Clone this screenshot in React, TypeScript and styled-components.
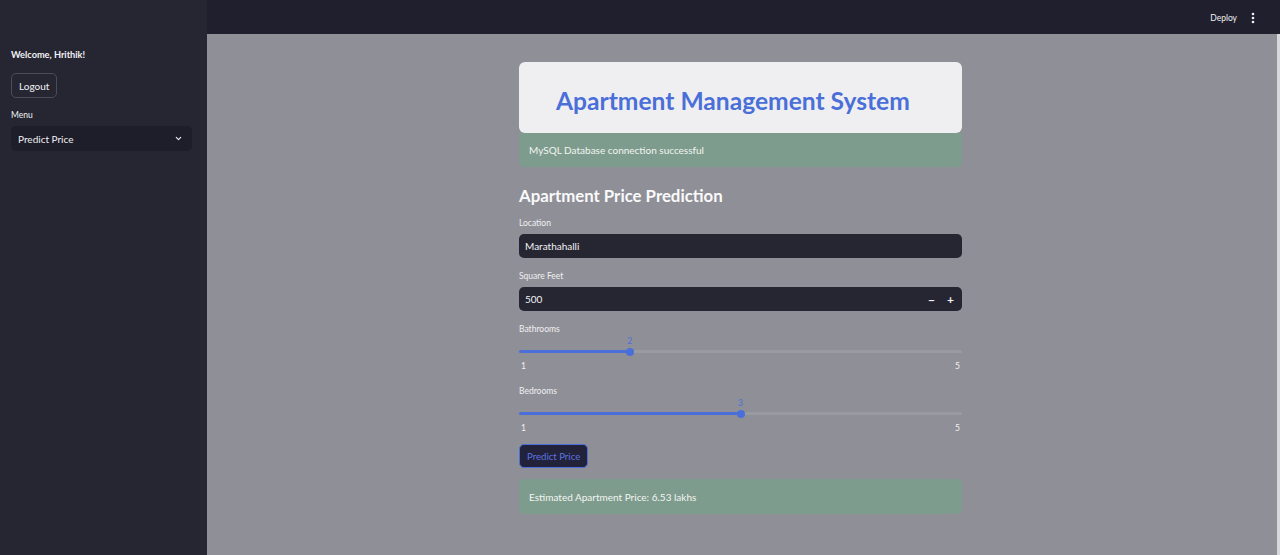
import React from "react";
import styled, { createGlobalStyle } from "styled-components";

const Global = createGlobalStyle`
  html, body { margin: 0; padding: 0; height: 100%; }
  body { font-family: Lato, "Noto Sans", sans-serif; background: #8f8f97; overflow: hidden; }
  #root { height: 555px; }
`;

const Shell = styled.div`
  display: grid;
  grid-template-columns: 207px 1fr;
  height: 555px;
`;

const Sidebar = styled.aside`
  background: #262633;
  padding: 48px 15px 0 11px;
  display: flex;
  flex-direction: column;
  color: #f2f2f4;
`;

const Welcome = styled.div`
  font-size: 9.2px;
  font-weight: 700;
  line-height: 14px;
`;

const GhostButton = styled.button`
  margin-top: 11px;
  align-self: flex-start;
  height: 25px;
  padding: 0 7px;
  background: transparent;
  color: #f2f2f4;
  border: 1px solid #4c4c58;
  border-radius: 5px;
  font: 400 10px Lato, "Noto Sans", sans-serif;
`;

const Label = styled.div<{ $mt?: number }>`
  font-size: 8.5px;
  color: #f0f0f2;
  line-height: 12px;
  margin-top: ${(p) => p.$mt ?? 0}px;
`;

const Select = styled.div`
  margin-top: 5px;
  height: 25px;
  background: #1e1e2b;
  border-radius: 5px;
  display: flex;
  align-items: center;
  justify-content: space-between;
  padding: 0 9px 0 7px;
  font-size: 10px;
  color: #f0f0f2;
`;

const Main = styled.main`
  display: flex;
  flex-direction: column;
  position: relative;
`;

const TopBar = styled.header`
  height: 34px;
  background: #1f1f2d;
  display: flex;
  align-items: center;
  justify-content: flex-end;
  padding-right: 25px;
  padding-top: 2px;
  box-sizing: border-box;
  gap: 14px;
  color: #f0f0f2;
  font-size: 8.5px;
`;

const Scroll = styled.div`
  position: absolute;
  right: 0;
  top: 34px;
  bottom: 0;
  width: 3px;
  background: #d8d8dc;
`;

const Content = styled.div`
  width: 443px;
  margin: 28px auto 0 312px;
  display: flex;
  flex-direction: column;
`;

const TitleCard = styled.div`
  height: 71px;
  background: #efeff2;
  border-radius: 6px;
  display: flex;
  align-items: center;
  padding-left: 37px;
  padding-top: 5px;
  box-sizing: border-box;
  color: #4a6fd8;
  font-size: 24.6px;
  font-weight: 700;
`;

const Alert = styled.div<{ $h: number }>`
  height: ${(p) => p.$h}px;
  background: #7e9c8d;
  border-radius: 0 0 5px 5px;
  display: flex;
  align-items: center;
  padding-left: 10px;
  font-size: 10px;
  color: #f2f5f2;
`;

const ResultAlert = styled(Alert)`
  border-radius: 5px;
  margin-top: 11px;
`;

const Heading = styled.h2`
  margin: 18px 0 0;
  font-size: 16.8px;
  font-weight: 700;
  color: #fafafa;
  line-height: 22px;
`;

const Field = styled.div<{ $mt: number }>`
  margin-top: ${(p) => p.$mt}px;
  display: flex;
  flex-direction: column;
`;

const Input = styled.div`
  margin-top: 5px;
  height: 24px;
  background: #262633;
  border-radius: 5px;
  display: flex;
  align-items: center;
  padding: 0 6px;
  font-size: 10px;
  color: #f2f2f4;
`;

const Steps = styled.div`
  margin-left: auto;
  display: flex;
  gap: 12px;
  font-size: 12px;
  font-weight: 700;
  padding-right: 2px;
`;

const SliderWrap = styled.div`
  position: relative;
  height: 24px;
`;

const Track = styled.div`
  position: absolute;
  left: 0;
  right: 0;
  top: 15px;
  height: 3px;
  border-radius: 2px;
  background: #9a9aa2;
`;

const Fill = styled.div`
  position: absolute;
  left: 0;
  top: 15px;
  height: 3px;
  border-radius: 2px;
  background: #4a6fd8;
`;

const Thumb = styled.div`
  position: absolute;
  top: 12.5px;
  width: 8px;
  height: 8px;
  margin-left: -4px;
  border-radius: 50%;
  background: #4a6fd8;
`;

const ThumbValue = styled.div`
  position: absolute;
  top: 1px;
  transform: translateX(-50%);
  font-size: 8.5px;
  color: #4a6fd8;
`;

const Range = styled.div`
  display: flex;
  justify-content: space-between;
  font-size: 8.5px;
  color: #f2f2f4;
  padding: 0 2px;
  margin-top: 2px;
`;

const PrimaryButton = styled.button`
  margin-top: 11px;
  align-self: flex-start;
  height: 24px;
  padding: 0 7px;
  background: #22223a;
  color: #5b73e0;
  border: 1px solid #4a6fd8;
  border-radius: 5px;
  font: 400 9.6px Lato, "Noto Sans", sans-serif;
`;

const Slider = ({ label, value, min, max, mt }: { label: string; value: number; min: number; max: number; mt: number }) => {
  const pct = ((value - min) / (max - min)) * 100;
  return (
    <Field $mt={mt}>
      <Label>{label}</Label>
      <SliderWrap>
        <Track />
        <Fill style={{ width: `${pct}%` }} />
        <ThumbValue style={{ left: `${pct}%` }}>{value}</ThumbValue>
        <Thumb style={{ left: `${pct}%` }} />
      </SliderWrap>
      <Range>
        <span>{min}</span>
        <span>{max}</span>
      </Range>
    </Field>
  );
};

export default function App() {
  return (
    <>
      <Global />
      <Shell>
        <Sidebar>
          <Welcome>Welcome, Hrithik!</Welcome>
          <GhostButton>Logout</GhostButton>
          <Label $mt={11}>Menu</Label>
          <Select>
            <span>Predict Price</span>
            <svg width="9" height="9" viewBox="0 0 24 24" fill="none" stroke="#f0f0f2" strokeWidth="3" strokeLinecap="round" strokeLinejoin="round">
              <path d="M6 9l6 6 6-6" />
            </svg>
          </Select>
        </Sidebar>
        <Main>
          <TopBar>
            <span>Deploy</span>
            <svg width="4" height="12" viewBox="0 0 4 12">
              <circle cx="2" cy="2" r="1.3" fill="#f0f0f2" />
              <circle cx="2" cy="6" r="1.3" fill="#f0f0f2" />
              <circle cx="2" cy="10" r="1.3" fill="#f0f0f2" />
            </svg>
          </TopBar>
          <Scroll />
          <Content>
            <TitleCard>Apartment Management System</TitleCard>
            <Alert $h={34}>MySQL Database connection successful</Alert>
            <Heading>Apartment Price Prediction</Heading>
            <Field $mt={10}>
              <Label>Location</Label>
              <Input>Marathahalli</Input>
            </Field>
            <Field $mt={12}>
              <Label>Square Feet</Label>
              <Input>
                500
                <Steps>
                  <span>−</span>
                  <span>+</span>
                </Steps>
              </Input>
            </Field>
            <Slider label="Bathrooms" value={2} min={1} max={5} mt={12} />
            <Slider label="Bedrooms" value={3} min={1} max={5} mt={14} />
            <PrimaryButton>Predict Price</PrimaryButton>
            <ResultAlert $h={35}>Estimated Apartment Price: 6.53 lakhs</ResultAlert>
          </Content>
        </Main>
      </Shell>
    </>
  );
}
